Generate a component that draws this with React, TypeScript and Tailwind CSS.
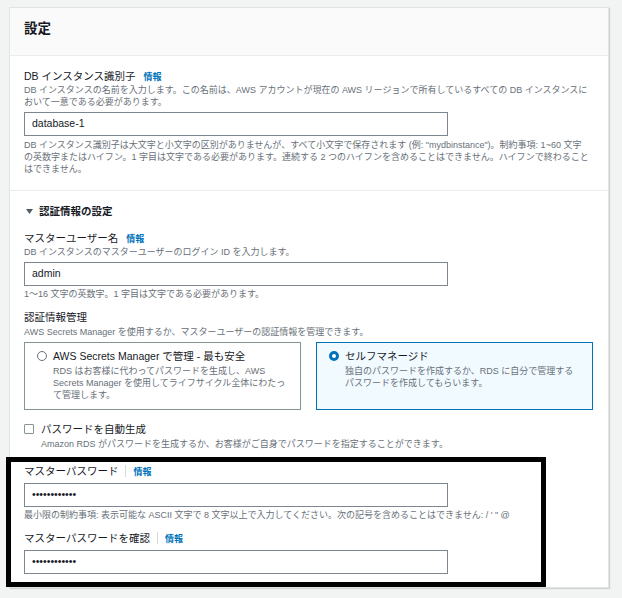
import React from "react";

function Label({ text, divider = false }: { text: string; divider?: boolean }) {
  return (
    <div className="flex items-baseline h-[14px]">
      <span className="text-[10.5px] leading-[14px] text-[#16191f] whitespace-nowrap">{text}</span>
      {divider ? (
        <span className="inline-block self-center w-px h-[12px] bg-[#d5dbdb] mx-[7px]" />
      ) : (
        <span className="inline-block w-[8px]" />
      )}
      <span className="text-[9px] leading-[14px] font-bold text-[#0073bb]">情報</span>
    </div>
  );
}

function Desc({ lines, className = "" }: { lines: string[]; className?: string }) {
  return (
    <div className={"text-[9px] leading-[12px] text-[#687078] whitespace-nowrap " + className}>
      {lines.map((l, i) => (
        <div key={i}>{l}</div>
      ))}
    </div>
  );
}

function Field({ value, className = "" }: { value: string; className?: string }) {
  return (
    <div
      className={
        "w-[424px] h-[24px] border border-[#7d8590] bg-white pl-[7px] flex items-center text-[10.5px] text-[#16191f] " +
        className
      }
    >
      {value}
    </div>
  );
}

export default function App() {
  return (
    <div className="relative w-[622px] h-[598px] overflow-hidden bg-[#f2f3f3] pt-[7px] pl-[9px] [font-family:'Liberation_Sans','Noto_Sans_CJK_JP',sans-serif] text-[#16191f]">
      <div className="w-[600px] bg-white border border-[#e1e4e4] shadow-[1px_1px_1px_0_rgba(0,28,36,0.15)]">
        {/* Header */}
        <div className="h-[48px] bg-[#fafafa] border-b border-[#eaeded] pl-[14px] pt-[12px]">
          <h2 className="text-[13.5px] leading-[18px] font-bold">設定</h2>
        </div>

        {/* DB identifier */}
        <div className="border-b border-[#eaeded] pl-[14px] pt-[13px] pb-[15px]">
          <Label text="DB インスタンス識別子" />
          <Desc
            className="mt-[1px]"
            lines={[
              "DB インスタンスの名前を入力します。この名前は、AWS アカウントが現在の AWS リージョンで所有しているすべての DB インスタンスに",
              "おいて一意である必要があります。",
            ]}
          />
          <Field value="database-1" className="mt-[4px]" />
          <Desc
            className="mt-[3px]"
            lines={[
              "DB インスタンス識別子は大文字と小文字の区別がありませんが、すべて小文字で保存されます (例: \"mydbinstance\")。制約事項: 1~60 文字",
              "の英数字またはハイフン。1 字目は文字である必要があります。連続する 2 つのハイフンを含めることはできません。ハイフンで終わること",
              "はできません。",
            ]}
          />
        </div>

        {/* Credentials */}
        <div className="pl-[14px] pt-[13px] pb-[13px]">
          <div className="flex items-center h-[14px]">
            <svg width="7" height="5" viewBox="0 0 7 5" className="ml-[2px]">
              <path d="M0 0 L7 0 L3.5 5 Z" fill="#545b64" />
            </svg>
            <span className="ml-[6px] text-[10.5px] leading-[14px] font-bold text-[#16191f]">認証情報の設定</span>
          </div>

          <div className="mt-[13px]">
            <Label text="マスターユーザー名" />
          </div>
          <Desc className="mt-[1px]" lines={["DB インスタンスのマスターユーザーのログイン ID を入力します。"]} />
          <Field value="admin" className="mt-[4px]" />
          <Desc className="mt-[2px]" lines={["1～16 文字の英数字。1 字目は文字である必要があります。"]} />

          <div className="mt-[10px] text-[10.5px] leading-[14px] text-[#16191f]">認証情報管理</div>
          <Desc
            className="mt-[2px]"
            lines={["AWS Secrets Manager を使用するか、マスターユーザーの認証情報を管理できます。"]}
          />

          <div className="mt-[4px] flex gap-[15px] w-[569px]">
            <div className="flex-1 h-[68px] border border-[#879596] bg-white pl-[12px] pt-[6px]">
              <div className="flex items-center h-[14px]">
                <span className="w-[10px] h-[10px] rounded-full border border-[#687078] bg-white shrink-0" />
                <span className="ml-[6px] text-[10.5px] leading-[14px] text-[#16191f] whitespace-nowrap">
                  AWS Secrets Manager で管理 - 最も安全
                </span>
              </div>
              <Desc
                className="mt-[2px] ml-[16px]"
                lines={[
                  "RDS はお客様に代わってパスワードを生成し、AWS",
                  "Secrets Manager を使用してライフサイクル全体にわたっ",
                  "て管理します。",
                ]}
              />
            </div>
            <div className="flex-1 h-[68px] border border-[#0073bb] bg-[#f1faff] pl-[12px] pt-[6px]">
              <div className="flex items-center h-[14px]">
                <span className="w-[10px] h-[10px] rounded-full border-[3px] border-[#0073bb] bg-white shrink-0" />
                <span className="ml-[6px] text-[10.5px] leading-[14px] text-[#16191f] whitespace-nowrap">
                  セルフマネージド
                </span>
              </div>
              <Desc
                className="mt-[2px] ml-[16px]"
                lines={["独自のパスワードを作成するか、RDS に自分で管理する", "パスワードを作成してもらいます。"]}
              />
            </div>
          </div>

          <div className="mt-[12px] flex items-center h-[14px]">
            <span className="w-[10px] h-[10px] border border-[#879596] rounded-[1px] bg-white shrink-0" />
            <span className="ml-[7px] text-[10.5px] leading-[14px] text-[#16191f]">パスワードを自動生成</span>
          </div>
          <Desc
            className="mt-[2px] ml-[17px]"
            lines={["Amazon RDS がパスワードを生成するか、お客様がご自身でパスワードを指定することができます。"]}
          />

          <div className="mt-[14px]">
            <Label text="マスターパスワード" divider />
          </div>
          <Field value="••••••••••••" className="mt-[5px]" />
          <Desc
            className="mt-[2px]"
            lines={[
              "最小限の制約事項: 表示可能な ASCII 文字で 8 文字以上で入力してください。次の記号を含めることはできません: / ' \" @",
            ]}
          />
          <div className="mt-[10px]">
            <Label text="マスターパスワードを確認" divider />
          </div>
          <Field value="••••••••••••" className="mt-[5px]" />
        </div>
      </div>

      {/* Highlight annotation */}
      <div className="absolute left-[6px] top-[457px] w-[540px] h-[130px] border-[5px] border-black" />
    </div>
  );
}
